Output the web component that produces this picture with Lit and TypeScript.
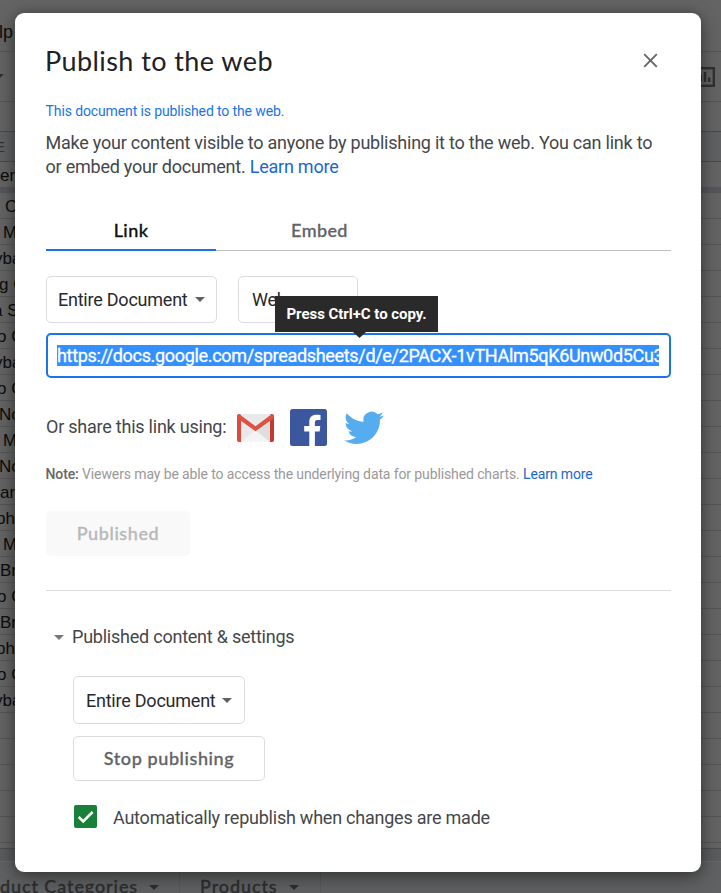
import { LitElement, html, css } from "lit";
import { customElement } from "lit/decorators.js";

interface Cell { text: string; x: number }

const CELLS: Cell[] = [
  { text: "Ca", x: 5 }, { text: "Mi", x: 3 }, { text: "yba", x: -6 }, { text: "g C", x: -1 },
  { text: "a S", x: -7 }, { text: "o C", x: -3 }, { text: "yba", x: -6 }, { text: "o C", x: -3 },
  { text: "No", x: -1 }, { text: "Mi", x: 3 }, { text: "No", x: -1 }, { text: "ar", x: 0 },
  { text: "phe", x: -4 }, { text: "Mi", x: 3 }, { text: "Br", x: 0 }, { text: "o C", x: -3 },
  { text: "Br", x: 0 }, { text: "phe", x: -4 }, { text: "o C", x: -3 }, { text: "yba", x: -6 },
  { text: "", x: 0 }, { text: "", x: 0 }, { text: "", x: 0 }, { text: "", x: 0 }, { text: "", x: 0 },
];

const arrow = (cls: string) => html`<svg class=${cls} width="10" height="5" viewBox="0 0 10 5"><path d="M0 0h10L5 5z" fill="currentColor"/></svg>`;

@customElement("sheet-backdrop")
class SheetBackdrop extends LitElement {
  static styles = css`
    :host { display: flex; flex-direction: column; height: 893px; overflow: hidden; background: #646464; color: #0c0c0c; font: 17px/26px "Liberation Sans", Arial, sans-serif; }
    :host > div { flex: none; }
    .menu { height: 52px; box-sizing: border-box; padding-top: 19px; border-bottom: 1px solid #575757; white-space: nowrap; }
    .menu span { margin-left: -1px; font-size: 18px; }
    .tools { height: 49px; display: flex; align-items: center; justify-content: space-between; border-bottom: 1px solid #555; color: #303133; }
    .tools .caret { margin-left: -6px; }
    .tools .chart { margin-right: 6px; }
    .formula { height: 29px; border-bottom: 1px solid #4a4a4a; }
    .heads { height: 29px; line-height: 30px; border-bottom: 1px solid #4a4a4a; background: #606162; font-size: 15px; color: #303133; }
    .heads span { margin-left: -5px; }
    .frozen { height: 25px; line-height: 28px; }
    .bar { height: 6px; background: #56575b; }
    .cell { height: 25px; line-height: 27px; border-bottom: 1px solid #555656; white-space: pre; }
    .cell span { display: inline-block; }
    .gap { height: 5px; border-bottom: 1px solid #4e4e4e; }
    .scroll { height: 12px; background: #5b5c5d; border-bottom: 1px solid #6a6a6a; }
    .sheets { height: 40px; display: flex; background: #606162; color: #2c2e30; font: 500 18px/26px Lato, "Open Sans", sans-serif; letter-spacing: .9px; -webkit-text-stroke: .3px currentColor; }
    .sheet { display: flex; align-items: flex-start; padding-top: 11px; border-right: 1px solid #5a5a5a; white-space: nowrap; box-sizing: border-box; }
    .sheet svg { margin: 12px 0 0 11px; }
    .first { width: 180px; }
    .second { width: 141px; padding-left: 20px; }
  `;
  render() {
    return html`
      <div class="menu"><span>lp</span></div>
      <div class="tools">${arrow("caret")}
        <svg class="chart" width="20" height="20" viewBox="0 0 20 20"><rect x="1.200" y="1.200" width="17.600" height="17.600" fill="none" stroke="currentColor" stroke-width="2.400"/><path d="M4.500 8h2.400v7H4.500zM8.800 5h2.400v10H8.800zM13 10.500h2.400V15H13z" fill="currentColor"/></svg>
      </div>
      <div class="formula"></div>
      <div class="heads"><span>E</span></div>
      <div class="frozen">er</div>
      <div class="bar"></div>
      ${CELLS.map(c => html`<div class="cell"><span style="margin-left:${c.x}px">${c.text}</span></div>`)}
      <div class="gap"></div>
      <div class="scroll"></div>
      <div class="sheets">
        <div class="sheet first"><span>duct Categories</span>${arrow("")}</div>
        <div class="sheet second"><span>Products</span>${arrow("")}</div>
      </div>`;
  }
}

@customElement("publish-dialog")
class PublishDialog extends LitElement {
  static styles = css`
    :host { display: block; box-sizing: border-box; width: 686px; height: 859px; padding: 31px 30px 0 31px; background: #fff; border-radius: 9px; box-shadow: 0 5px 20px rgba(0,0,0,.42), 0 0 10px rgba(0,0,0,.15); font: 18px/24px Roboto, sans-serif; letter-spacing: -.23px; color: #44474a; }
    a { color: #1967d2; text-decoration: none; }
    .header { display: flex; justify-content: space-between; align-items: center; height: 34px; }
    .title { font: 400 27px/34px Lato, sans-serif; letter-spacing: .42px; margin-left: -1px; color: #202124; white-space: nowrap; }
    .close { margin: -1px 13px 0 0; }
    .status { margin: 23px 0 0 -.4px; height: 20px; font-size: 14px; line-height: 20px; letter-spacing: -.12px; color: #1a73e8; }
    .intro { margin: 10px 0 0 -.5px; height: 48px; white-space: nowrap; }
    .tabs { margin-top: 32px; height: 40px; box-sizing: border-box; display: flex; border-bottom: 1px solid #bdbdbd; font: 500 18px/39px Lato, sans-serif; letter-spacing: .4px; -webkit-text-stroke: .3px currentColor; text-align: center; color: #5f6368; }
    .tab { width: 207px; height: 40px; box-sizing: border-box; }
    .active { width: 170px; color: #111; border-bottom: 2px solid #1a73e8; }
    .row { display: flex; gap: 21px; margin-top: 25px; }
    .select { box-sizing: border-box; width: 171px; height: 47px; border: 1px solid #dadce0; border-radius: 5px; padding: 0 11px; display: flex; align-items: center; justify-content: space-between; color: #28292c; white-space: nowrap; }
    .select svg { color: #5f6368; }
    .kind { width: 120px; padding-left: 13px; }
    .field { position: relative; box-sizing: border-box; height: 45px; margin-top: 10px; border: 2px solid #1a73e8; border-radius: 5px; padding: 10px 10px 0 9px; }
    .url { height: 21px; line-height: 21px; overflow: hidden; white-space: nowrap; background: #3390ff; color: #fff; letter-spacing: -.32px; -webkit-text-stroke: .3px #fff; }
    .tip { position: absolute; left: 227px; top: -39px; width: 163px; height: 36px; background: #2a2a2a; color: #fff; font: 700 15px/36px Roboto, sans-serif; letter-spacing: -.04px; text-align: center; white-space: nowrap; }
    .tip svg { position: absolute; left: 78px; top: 36px; }
    .share { display: flex; align-items: center; height: 40px; margin-top: 29px; }
    .share span { width: 191px; }
    .gm { margin-top: 2px; }
    .fb { margin-left: 16px; }
    .tw { margin-left: 17px; }
    .note { margin: 17px 0 0 -.5px; font-size: 14px; line-height: 20px; letter-spacing: -.115px; color: #999; white-space: nowrap; }
    .note b { color: #666; font-weight: 500; }
    .button { box-sizing: border-box; height: 45px; border-radius: 5px; font: 500 18px/45px Lato, sans-serif; text-align: center; letter-spacing: .6px; -webkit-text-stroke: .3px currentColor; }
    .published { width: 144px; margin-top: 27px; background: #f9f9f9; color: #b7b8ba; }
    .divider { margin-top: 34px; height: 1px; background: #dcdcdc; }
    .toggle { display: flex; align-items: center; gap: 8px; margin: 34px 0 0 8px; height: 24px; }
    .toggle svg { color: #777; margin-top: 1px; }
    .settings { margin-left: 27px; }
    .scope { width: 172px; height: 48px; margin-top: 27px; padding: 0 12px; }
    .scope span { padding-top: 2px; }
    .stop { width: 192px; margin-top: 12px; border: 1px solid #dadce0; line-height: 43px; color: #5f6368; }
    .auto { display: flex; align-items: center; margin: 23px 0 0 1px; height: 24px; gap: 16px; }
    .box { width: 23px; height: 23px; background: #188038; border-radius: 2px; }
    .box svg { display: block; }
    .auto span { padding-top: 3px; white-space: nowrap; }
  `;
  render() {
    return html`
      <div class="header">
        <div class="title">Publish to the web</div>
        <svg class="close" width="15" height="15" viewBox="0 0 15 15"><path d="M1.200 1.200l12.600 12.600M13.800 1.200L1.200 13.800" stroke="#666" stroke-width="1.900" fill="none"/></svg>
      </div>
      <div class="status">This document is published to the web.</div>
      <div class="intro">Make your content visible to anyone by publishing it to the web. You can link to<br>or embed your document. <a>Learn more</a></div>
      <div class="tabs"><div class="tab active">Link</div><div class="tab">Embed</div></div>
      <div class="row">
        <div class="select"><span>Entire Document</span>${arrow("")}</div>
        <div class="select kind"><span>Web page</span></div>
      </div>
      <div class="field">
        <div class="url">https://docs.google.com/spreadsheets/d/e/2PACX-1vTHAlm5qK6Unw0d5Cu3</div>
        <div class="tip">Press Ctrl+C to copy.<svg width="13" height="6" viewBox="0 0 13 6"><path d="M0 0h13L6.500 6z" fill="#2a2a2a"/></svg></div>
      </div>
      <div class="share"><span>Or share this link using:</span>
        <svg class="gm" width="37" height="28" viewBox="0 0 37 28">
          <path d="M2 0h33a2 2 0 0 1 2 2v24a2 2 0 0 1-2 2H2a2 2 0 0 1-2-2V2a2 2 0 0 1 2-2z" fill="#e9e9e9"/>
          <path d="M4 28l14.500-12L33 28z" fill="#f4f4f4"/><path d="M18.500 16L33 5v23z" fill="#dedede"/>
          <path d="M0 2.500A2.500 2.500 0 0 1 2.500 0L4 1v27H2a2 2 0 0 1-2-2z" fill="#dd4b3e"/>
          <path d="M37 2.500A2.500 2.500 0 0 0 34.500 0L33 1v27h2a2 2 0 0 0 2-2z" fill="#c53a30"/>
          <path d="M0 2.300C0 .3 2 0 3 .8l15.500 11.400L34 .8c1-.8 3-.5 3 1.500 0 1.200-.5 2-1.400 2.600L18.500 17.300 1.400 4.900C.5 4.300 0 3.500 0 2.300z" fill="#de5145"/>
        </svg>
        <svg class="fb" width="37" height="37" viewBox="0 0 37 37"><rect width="37" height="37" rx="2.500" fill="#3b579d"/><path d="M19.300 37V22.600h-5.100v-5.500h5.100v-4.300c0-4.700 2.900-7.100 7-7.100 2 0 3.700.15 4.200.2v5h-2.900c-2.300 0-2.700 1.100-2.700 2.700v3.500h5.400l-.7 5.500h-4.700V37z" fill="#fff"/></svg>
        <svg class="tw" width="40" height="33" viewBox="0 1.800 24 20" preserveAspectRatio="none"><path d="M23.950 4.570a10 10 0 0 1-2.820.77 4.960 4.960 0 0 0 2.160-2.720c-.95.55-2 .96-3.130 1.180a4.920 4.920 0 0 0-8.380 4.480C7.690 8.100 4.070 6.130 1.640 3.160a4.820 4.820 0 0 0-.67 2.480c0 1.710.87 3.210 2.190 4.100a4.900 4.900 0 0 1-2.230-.62v.06a4.920 4.920 0 0 0 3.950 4.830 5 5 0 0 1-2.210.08 4.940 4.940 0 0 0 4.600 3.420A9.870 9.870 0 0 1 0 19.540a13.990 13.990 0 0 0 7.550 2.210c9.050 0 14-7.500 14-13.980 0-.21 0-.42-.02-.63a9.940 9.940 0 0 0 2.460-2.550z" fill="#55acee"/></svg>
      </div>
      <div class="note"><b>Note:</b> Viewers may be able to access the underlying data for published charts. <a>Learn more</a></div>
      <div class="button published">Published</div>
      <div class="divider"></div>
      <div class="toggle">${arrow("")}<span>Published content &amp; settings</span></div>
      <div class="settings">
        <div class="select scope"><span>Entire Document</span>${arrow("")}</div>
        <div class="button stop">Stop publishing</div>
        <div class="auto"><div class="box"><svg width="23" height="23" viewBox="0 0 23 23"><path d="M4.700 12l4.500 4.500L18.600 7" fill="none" stroke="#fff" stroke-width="2.500"/></svg></div><span>Automatically republish when changes are made</span></div>
      </div>`;
  }
}

@customElement("app-root")
class AppRoot extends LitElement {
  static styles = css`
    :host { display: block; position: relative; width: 721px; height: 893px; overflow: hidden; }
    .modal { position: absolute; left: 15px; top: 13px; }
  `;
  render() {
    return html`<sheet-backdrop></sheet-backdrop><publish-dialog class="modal"></publish-dialog>`;
  }
}
